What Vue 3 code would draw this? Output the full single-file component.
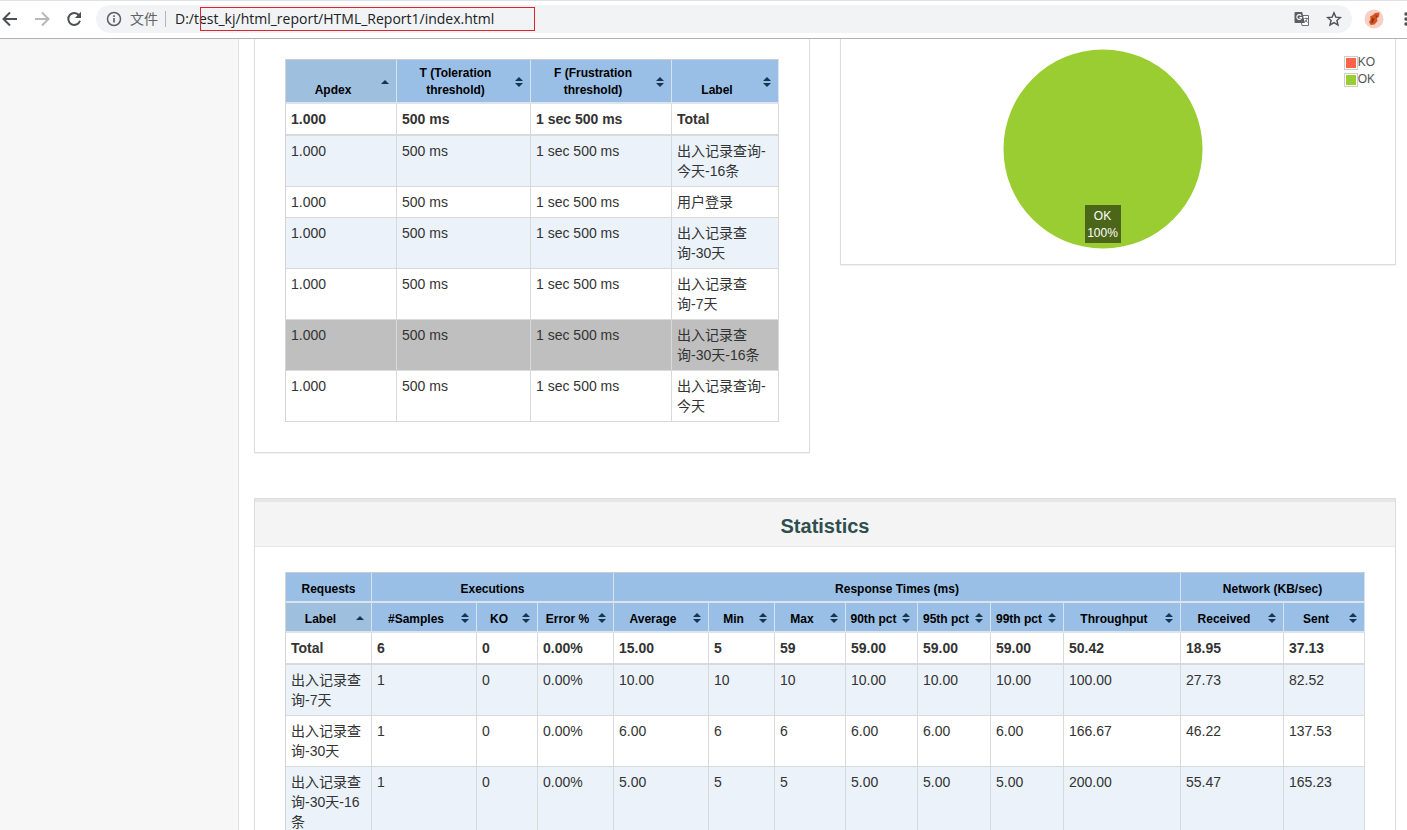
<script setup>
import { ref } from 'vue'

const url = ref('D:/test_kj/html_report/HTML_Report1/index.html')

const apdexCols = [
  { title: 'Apdex', width: 111, sorted: true },
  { title: 'T (Toleration threshold)', width: 134 },
  { title: 'F (Frustration threshold)', width: 141 },
  { title: 'Label', width: 107 },
]
const apdexLabels = [
  '出入记录查询-今天-16条',
  '用户登录',
  '出入记录查询-30天',
  '出入记录查询-7天',
  '出入记录查询-30天-16条',
  '出入记录查询-今天',
]
const hovered = 4

const groups = [
  { title: 'Requests', span: 1 },
  { title: 'Executions', span: 3 },
  { title: 'Response Times (ms)', span: 7 },
  { title: 'Network (KB/sec)', span: 2 },
]
const statCols = [
  { title: 'Label', width: 86, sorted: true },
  { title: '#Samples', width: 105 },
  { title: 'KO', width: 61 },
  { title: 'Error %', width: 76 },
  { title: 'Average', width: 95 },
  { title: 'Min', width: 66 },
  { title: 'Max', width: 71 },
  { title: '90th pct', width: 72 },
  { title: '95th pct', width: 73 },
  { title: '99th pct', width: 73 },
  { title: 'Throughput', width: 117 },
  { title: 'Received', width: 103 },
  { title: 'Sent', width: 81 },
]
const statTotal = ['Total', '6', '0', '0.00%', '15.00', '5', '59', '59.00', '59.00', '59.00', '50.42', '18.95', '37.13']
const statRows = [
  ['出入记录查询-7天', '1', '0', '0.00%', '10.00', '10', '10', '10.00', '10.00', '10.00', '100.00', '27.73', '82.52'],
  ['出入记录查询-30天', '1', '0', '0.00%', '6.00', '6', '6', '6.00', '6.00', '6.00', '166.67', '46.22', '137.53'],
  ['出入记录查询-30天-16条', '1', '0', '0.00%', '5.00', '5', '5', '5.00', '5.00', '5.00', '200.00', '55.47', '165.23'],
]

const share = (cols, col) => `${(col.width / cols.reduce((s, c) => s + c.width, 0)) * 100}%`

const marks = []
for (let c = 0; c < 6; c++) {
  for (let r = 0; r < 3; r++) marks.push({ x: 62 + c * 277, y: 168 + c * 33 + r * 310 })
}
</script>

<template>
  <div class="browser">
    <header class="toolbar">
      <button class="icon-btn" aria-label="Back">
        <svg width="20" height="20" viewBox="0 0 20 20" fill="none" stroke="#4d5055" stroke-width="2"><path d="M17 10H4M10 3.5L3.5 10l6.500 6.500" /></svg>
      </button>
      <button class="icon-btn" aria-label="Forward">
        <svg width="20" height="20" viewBox="0 0 20 20" fill="none" stroke="#b6b8ba" stroke-width="2"><path d="M3 10h13M10 3.500l6.500 6.500-6.500 6.500" /></svg>
      </button>
      <button class="icon-btn" aria-label="Reload">
        <svg width="20" height="20" viewBox="0 0 20 20"><path d="M15.300 6.600A6 6 0 1 0 16 11.800" fill="none" stroke="#4d5055" stroke-width="2" /><path d="M17 2.800v6.200h-6.200z" fill="#4d5055" /></svg>
      </button>
      <div class="omnibox">
        <svg class="info" width="16" height="16" viewBox="0 0 16 16"><circle cx="8" cy="8" r="6.500" fill="none" stroke="#5b5e62" stroke-width="1.500" /><path d="M7.200 7h1.600v4.500H7.200zM7.200 4.300h1.600v1.600H7.200z" fill="#5b5e62" /></svg>
        <span class="scheme">文件</span>
        <span class="rule"></span>
        <input v-model="url" class="url" type="text" aria-label="Address" />
        <span class="highlight"></span>
        <button class="icon-btn" aria-label="Translate">
          <svg width="16" height="16" viewBox="0 0 16 16"><path d="M6 4.500h8.500v10H8z" fill="#fff" stroke="#6a6d71" /><path d="M1.500 1h6.700l2.700 11H1.500a1 1 0 0 1-1-1V2a1 1 0 0 1 1-1z" fill="#5b5e62" /><path d="M7.200 4.600A2.400 2.400 0 1 0 7.600 6.500H5.500" fill="none" stroke="#fff" stroke-width="1.100" /><path d="M10.300 7.500h3.700M12 6.500v1M13.300 7.500c-.4 1.700-1.300 2.900-2.500 3.800M11.300 9l2.200 2.700" fill="none" stroke="#6a6d71" stroke-width=".9" /></svg>
        </button>
        <button class="icon-btn" aria-label="Bookmark this page">
          <svg width="16" height="16" viewBox="0 0 16 16"><path d="M8 1.800l1.800 4.300 4.600.4-3.500 3 1.100 4.500L8 11.600 4 14l1.100-4.500-3.500-3 4.600-.4z" fill="none" stroke="#4d5055" stroke-width="1.400" /></svg>
        </button>
      </div>
      <button class="icon-btn avatar" aria-label="Profile">
        <svg width="20" height="20" viewBox="0 0 20 20"><circle cx="10" cy="10" r="9.500" fill="#f8cfc4" /><path d="M6 7.500l3-1.500 2-2 4.500-.5-.5 4-2 2 .5 2.500-3 3.500-4 .5-1.500-3 1.500-2.500z" fill="#d9541e" /><path d="M8 9l2.500.5-1.500 4-2 .5zM11.500 6l2 1-1.500 2z" fill="#8d3416" /></svg>
      </button>
      <button class="icon-btn" aria-label="Menu">
        <svg width="4" height="16" viewBox="0 0 4 16" fill="#4d5055"><circle cx="2" cy="3" r="1.700" /><circle cx="2" cy="8" r="1.700" /><circle cx="2" cy="13" r="1.700" /></svg>
      </button>
    </header>

    <div class="page">
      <aside class="sidebar"></aside>
      <main class="content">
        <div class="row">
          <section class="panel open">
            <table>
              <colgroup>
                <col v-for="c in apdexCols" :key="c.title" :style="{ width: share(apdexCols, c) }" />
              </colgroup>
              <thead>
                <tr>
                  <th v-for="c in apdexCols" :key="c.title" :class="['sortable', { sorted: c.sorted }]">
                    <button class="sort">{{ c.title }}</button>
                    <svg class="arrows" width="8" height="10" viewBox="0 0 8 10" fill="#17344f"><path v-if="c.sorted" d="M0 7l4-4 4 4z" /><path v-else d="M0 4l4-4 4 4zM0 6h8l-4 4z" /></svg>
                  </th>
                </tr>
              </thead>
              <tbody>
                <tr class="total"><td>1.000</td><td>500 ms</td><td>1 sec 500 ms</td><td>Total</td></tr>
                <tr v-for="(label, i) in apdexLabels" :key="label" :class="{ odd: i % 2 === 0, hover: i === hovered }">
                  <td>1.000</td><td>500 ms</td><td>1 sec 500 ms</td><td>{{ label }}</td>
                </tr>
              </tbody>
            </table>
          </section>

          <section class="panel pie-panel">
            <div class="pie">
              <svg width="200" height="200" viewBox="0 0 200 200"><circle cx="100" cy="100" r="99.500" fill="#9acd32" /></svg>
              <div class="pie-label">OK<br />100%</div>
            </div>
            <ul class="legend">
              <li><span class="swatch ko"></span>KO</li>
              <li><span class="swatch ok"></span>OK</li>
            </ul>
          </section>
        </div>

        <section class="panel">
          <h2>Statistics</h2>
          <div class="body">
            <table>
              <colgroup>
                <col v-for="c in statCols" :key="c.title" :style="{ width: share(statCols, c) }" />
              </colgroup>
              <thead>
                <tr>
                  <th v-for="g in groups" :key="g.title" :colspan="g.span">{{ g.title }}</th>
                </tr>
                <tr>
                  <th v-for="c in statCols" :key="c.title" :class="['sortable', { sorted: c.sorted }]">
                    <button class="sort">{{ c.title }}</button>
                    <svg class="arrows" width="8" height="10" viewBox="0 0 8 10" fill="#17344f"><path v-if="c.sorted" d="M0 7l4-4 4 4z" /><path v-else d="M0 4l4-4 4 4zM0 6h8l-4 4z" /></svg>
                  </th>
                </tr>
              </thead>
              <tbody>
                <tr class="total"><td v-for="(v, i) in statTotal" :key="i">{{ v }}</td></tr>
                <tr v-for="(row, r) in statRows" :key="r" :class="{ odd: r % 2 === 0 }">
                  <td v-for="(v, i) in row" :key="i">{{ v }}</td>
                </tr>
              </tbody>
            </table>
          </div>
        </section>
      </main>
    </div>

    <svg class="watermark" width="100%" height="100%" aria-hidden="true">
      <text v-for="(m, i) in marks" :key="i" :transform="`translate(${m.x} ${m.y}) rotate(-43)`">18043 (JUNPU) LAN-83.11.1A</text>
    </svg>
  </div>
</template>

<style>
body {
  margin: 0;
  background: #fff;
}
</style>

<style scoped>
.browser {
  position: relative;
  display: flex;
  flex-direction: column;
  height: 100vh;
  overflow: hidden;
  font-family: "Liberation Sans", Arial, "Noto Sans CJK SC", sans-serif;
  font-size: 14px;
  line-height: 20px;
  color: #333;
}
button {
  margin: 0;
  padding: 0;
  border: 0;
  background: none;
  font: inherit;
  color: inherit;
}
.toolbar {
  display: flex;
  align-items: center;
  gap: 12px;
  flex: none;
  height: 38px;
  box-shadow: inset 0 1px 0 #dee1e6, 0 1px 0 #b0b0b0;
}
.icon-btn {
  display: flex;
  flex: none;
}
.avatar {
  margin-right: 8px;
}
.toolbar > :last-child {
  margin-right: -1px;
}
.omnibox {
  position: relative;
  display: flex;
  align-items: center;
  flex: 1;
  height: 28px;
  padding: 0 10px;
  border-radius: 14px;
  background: #f1f3f4;
}
.info {
  flex: none;
}
.scheme {
  margin: 0 7px 0 8px;
  color: #5f6368;
}
.rule {
  width: 1px;
  height: 16px;
  margin-right: 9px;
  background: #b4b6b9;
}
.url {
  flex: 1;
  min-width: 0;
  padding: 0;
  border: 0;
  outline: 0;
  background: none;
  font-family: "Open Sans", "Noto Sans", sans-serif;
  font-size: 14px;
  line-height: 20px;
  color: #202124;
}
.highlight {
  position: absolute;
  left: 104px;
  top: 2px;
  width: 333px;
  height: 22px;
  border: 1px solid #d9262c;
}
.omnibox .icon-btn + .icon-btn {
  margin-left: 16px;
}
.page {
  display: flex;
  flex: 1;
  min-height: 0;
  margin-top: 1px;
}
.sidebar {
  flex: none;
  width: 238px;
  background: #f7f7f7;
  border-right: 1px solid #e2e2e2;
}
.content {
  flex: 1;
  min-width: 0;
  padding: 0 11px 0 15px;
}
.row {
  display: grid;
  grid-template-columns: 1fr 1fr;
  align-items: start;
  gap: 30px;
  margin-bottom: 45px;
}
.panel {
  box-sizing: border-box;
  border: 1px solid #ddd;
  box-shadow: 0 1px 1px rgba(0, 0, 0, 0.05);
}
.row .panel {
  border-top: 0;
}
.open {
  padding: 20px 30px 30px;
}
.pie-panel {
  position: relative;
  padding: 10px 31px 15px 0;
}
.pie {
  position: relative;
  width: 200px;
  height: 200px;
  margin: 0 auto;
}
.pie-label {
  position: absolute;
  left: 82px;
  bottom: 6px;
  box-sizing: border-box;
  width: 36px;
  padding: 3px 0 1px;
  background: #4c6619;
  color: #fff;
  font-size: 12px;
  line-height: 17px;
  text-align: center;
}
.legend {
  position: absolute;
  top: 15px;
  right: 20px;
  margin: 0;
  padding: 0;
  list-style: none;
  font-size: 12px;
  line-height: 17px;
  color: #545454;
}
.legend li {
  display: flex;
  align-items: center;
}
.swatch {
  width: 10px;
  height: 10px;
  padding: 1px;
  border: 1px solid #ccc;
  background-clip: content-box;
}
.ko {
  background-color: #ff6347;
}
.ok {
  background-color: #9acd32;
}
h2 {
  margin: 0;
  padding: 13px 0 9px;
  border-top: 3px solid #e6e6e6;
  border-bottom: 1px solid #e7e7e7;
  background: #f4f4f4;
  color: #2f4f4f;
  font-size: 20px;
  line-height: 22px;
  text-align: center;
}
.body {
  padding: 25px 30px;
}
table {
  width: 100%;
  table-layout: fixed;
  border-collapse: separate;
  border-spacing: 0;
  border-top: 1px solid #cdcdcd;
  border-left: 1px solid #d4d4d4;
}
th {
  position: relative;
  padding: 8px 4px 3px;
  border-right: 1px solid #d9e3ee;
  border-bottom: 2px solid #dde3ea;
  background: #99bfe6;
  color: #000;
  font-size: 12px;
  line-height: 17px;
  vertical-align: bottom;
}
th.sortable {
  padding: 5px 20px 3px 4px;
  height: 20px;
}
th.sorted {
  background: #9fbfdf;
}
.sort::after {
  content: "";
  position: absolute;
  inset: 0;
}
.arrows {
  position: absolute;
  right: 7px;
  top: 50%;
  margin-top: -4px;
}
td {
  padding: 5px;
  border-right: 1px solid #d9d9d9;
  border-bottom: 1px solid #d9d9d9;
  background: #fff;
  vertical-align: top;
}
.total td {
  border-bottom-width: 2px;
  font-weight: bold;
}
.odd td {
  background: #ebf2fa;
}
.hover td {
  background: #bfbfbf;
}
.watermark {
  position: absolute;
  inset: 0;
  pointer-events: none;
  font-size: 12px;
}
.watermark text {
  text-anchor: middle;
  fill: rgba(0, 0, 0, 0.02);
}
</style>
